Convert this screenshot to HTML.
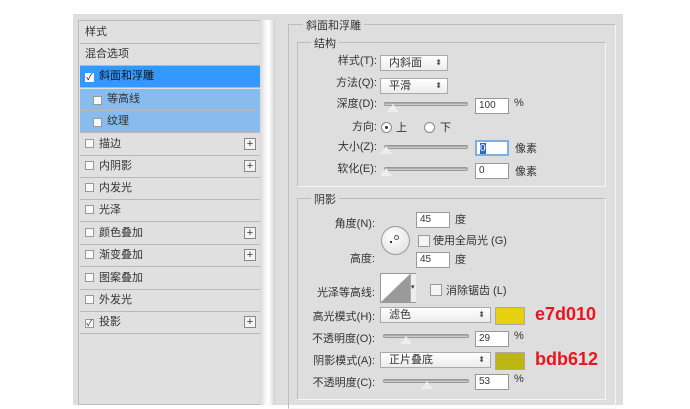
<!DOCTYPE html>
<html><head><meta charset="utf-8"><style>
*{margin:0;padding:0;box-sizing:border-box}
body{width:690px;height:405px;background:#fff;position:relative;overflow:hidden;font-family:"Liberation Sans","Noto Sans CJK SC",sans-serif;font-size:11px;color:#333}
.a{position:absolute}
.dlg{left:73px;top:14px;width:550px;height:391px;background:#dedede}
.row{position:absolute;left:80px;width:180px;height:22px;border-bottom:1px solid #b8b8b8;line-height:21px;padding-left:5px;background:#e0e0e0}
.cb{display:inline-block;width:9px;height:9px;border:1px solid #999;background:#fafafa;vertical-align:-1px;margin-right:5px;font-size:9px;line-height:7px;text-align:center}
.plus{position:absolute;right:4px;top:4px;width:12px;height:12px;border:1px solid #888;background:#f4f4f4;font-size:11px;line-height:10px;text-align:center}
.box{position:absolute;border:1px solid #bdbdbd;border-right-color:#f6f6f6;border-bottom-color:#f6f6f6}
.lbl{position:absolute;text-align:right;white-space:nowrap;margin-top:-4px}
.dd{position:absolute;background:linear-gradient(#fff,#ececec);border:1px solid #aaa;padding-left:8px;line-height:14px;height:16px}
.dd:after{content:"⬍";position:absolute;right:5px;top:0;font-size:8px;color:#555}
.inp{position:absolute;background:#fff;border:1px solid #999;width:34px;height:16px;line-height:14px;padding-left:3px;font-size:10px}
.sl{position:absolute;height:4px;border-radius:2px;background:linear-gradient(#999,#ddd);border:1px solid #999}
.th{position:absolute;width:0;height:0;border-left:6px solid transparent;border-right:6px solid transparent;border-bottom:8px solid #eee}
.rad{position:absolute;width:11px;height:11px;border-radius:50%;border:1px solid #888;background:#fff}
.red{position:absolute;color:#e8161c;font-weight:bold;font-size:18px;font-family:"Liberation Sans",sans-serif}
</style></head><body>
<div class="a dlg"></div>
<div class="a" style="left:78px;top:20px;width:197px;height:385px;background:#e0e0e0;border:1px solid #bbb"></div>
<div class="a" style="left:260px;top:20px;width:15px;height:385px;background:linear-gradient(90deg,#d8d8d8,#fafafa 40%,#fff 60%,#d0d0d0)"></div>
<div class="row" style="top:22px">样式</div>
<div class="row" style="top:44px">混合选项</div>
<div class="row" style="top:66px;background:#3399ff;color:#111"><span class="cb" style="border-color:#fff">✓</span>斜面和浮雕</div>
<div class="row" style="top:89px;background:#88bbee;padding-left:13px"><span class="cb">&nbsp;</span>等高线</div>
<div class="row" style="top:111px;background:#88bbee;padding-left:13px"><span class="cb">&nbsp;</span>纹理</div>
<div class="row" style="top:134px"><span class="cb"></span>描边<div class="plus">+</div></div>
<div class="row" style="top:156px"><span class="cb"></span>内阴影<div class="plus">+</div></div>
<div class="row" style="top:178px"><span class="cb"></span>内发光</div>
<div class="row" style="top:200px"><span class="cb"></span>光泽</div>
<div class="row" style="top:223px"><span class="cb"></span>颜色叠加<div class="plus">+</div></div>
<div class="row" style="top:245px"><span class="cb"></span>渐变叠加<div class="plus">+</div></div>
<div class="row" style="top:268px"><span class="cb"></span>图案叠加</div>
<div class="row" style="top:290px"><span class="cb"></span>外发光</div>
<div class="row" style="top:312px"><span class="cb">✓</span>投影<div class="plus">+</div></div>

<div class="box" style="left:288px;top:24px;width:328px;height:385px"></div>
<div class="a" style="left:303px;top:17px;background:#dedede;padding:0 3px">斜面和浮雕</div>
<div class="box" style="left:297px;top:42px;width:309px;height:145px"></div>
<div class="a" style="left:311px;top:35px;background:#dedede;padding:0 3px">结构</div>
<div class="lbl" style="right:313px;top:56px">样式(T):</div>
<div class="dd" style="left:380px;top:55px;width:68px">内斜面</div>
<div class="lbl" style="right:313px;top:78px">方法(Q):</div>
<div class="dd" style="left:380px;top:78px;width:68px">平滑</div>
<div class="lbl" style="right:313px;top:99px">深度(D):</div>
<div class="sl" style="left:384px;top:102px;width:84px"></div><div class="th" style="left:387px;top:104px"></div>
<div class="inp" style="left:475px;top:98px">100</div><div class="a" style="left:514px;top:97px">%</div>
<div class="lbl" style="right:313px;top:122px">方向:</div>
<div class="rad" style="left:381px;top:122px"><div class="a" style="left:3px;top:3px;width:3px;height:3px;border-radius:50%;background:#333"></div></div>
<div class="a" style="left:396px;top:119px">上</div>
<div class="rad" style="left:424px;top:122px"></div><div class="a" style="left:440px;top:119px">下</div>
<div class="lbl" style="right:313px;top:142px">大小(Z):</div>
<div class="sl" style="left:384px;top:145px;width:84px"></div><div class="th" style="left:380px;top:146px"></div>
<div class="inp" style="left:475px;top:140px;border:2px solid #7ab0e8"><span style="background:#3366cc;color:#fff">0</span></div><div class="a" style="left:515px;top:140px">像素</div>
<div class="lbl" style="right:313px;top:164px">软化(E):</div>
<div class="sl" style="left:384px;top:167px;width:84px"></div><div class="th" style="left:380px;top:168px"></div>
<div class="inp" style="left:475px;top:163px">0</div><div class="a" style="left:515px;top:163px">像素</div>

<div class="box" style="left:297px;top:198px;width:309px;height:202px"></div>
<div class="a" style="left:311px;top:191px;background:#dedede;padding:0 3px">阴影</div>
<div class="lbl" style="right:315px;top:219px">角度(N):</div>
<div class="a" style="left:381px;top:226px;width:29px;height:29px;border-radius:50%;border:1px solid #999;background:radial-gradient(circle at 40% 35%,#fff,#ddd)"><div class="a" style="left:12px;top:8px;width:5px;height:5px;border-radius:50%;border:1px solid #555"></div><div class="a" style="left:8px;top:14px;width:2px;height:2px;background:#333"></div></div>
<div class="inp" style="left:416px;top:212px">45</div><div class="a" style="left:455px;top:211px">度</div>
<div class="a" style="left:418px;top:235px;width:12px;height:12px;border:1px solid #999;background:#f4f4f4"></div>
<div class="a" style="left:433px;top:232px">使用全局光 (G)</div>
<div class="lbl" style="right:315px;top:254px">高度:</div>
<div class="inp" style="left:416px;top:252px">45</div><div class="a" style="left:455px;top:251px">度</div>
<div class="lbl" style="right:315px;top:288px">光泽等高线:</div>
<div class="a" style="left:380px;top:273px;width:36px;height:30px;border:1px solid #999;background:#fff"><svg width="30" height="28" style="position:absolute;left:0;top:0"><polygon points="0,28 29,0 29,28" fill="#9a9a9a"/></svg><div class="a" style="left:29px;top:0;width:6px;height:28px;background:#eee;border-left:1px solid #aaa;font-size:7px;line-height:28px">▾</div></div>
<div class="a" style="left:430px;top:284px;width:12px;height:12px;border:1px solid #999;background:#f4f4f4"></div>
<div class="a" style="left:446px;top:282px">消除锯齿 (L)</div>
<div class="lbl" style="right:315px;top:312px">高光模式(H):</div>
<div class="dd" style="left:380px;top:307px;width:111px">滤色</div>
<div class="a" style="left:495px;top:307px;width:30px;height:18px;background:#e7d010;border:1px solid #aaa"></div>
<div class="red" style="left:535px;top:304px">e7d010</div>
<div class="lbl" style="right:315px;top:334px">不透明度(O):</div>
<div class="sl" style="left:383px;top:334px;width:86px"></div><div class="th" style="left:400px;top:336px"></div>
<div class="inp" style="left:475px;top:331px">29</div><div class="a" style="left:514px;top:330px">%</div>
<div class="lbl" style="right:315px;top:356px">阴影模式(A):</div>
<div class="dd" style="left:380px;top:352px;width:111px">正片叠底</div>
<div class="a" style="left:495px;top:352px;width:30px;height:18px;background:#bdb612;border:1px solid #aaa"></div>
<div class="red" style="left:535px;top:349px">bdb612</div>
<div class="lbl" style="right:315px;top:378px">不透明度(C):</div>
<div class="sl" style="left:383px;top:379px;width:86px"></div><div class="th" style="left:421px;top:381px"></div>
<div class="inp" style="left:475px;top:374px">53</div><div class="a" style="left:514px;top:373px">%</div>
</body></html>
